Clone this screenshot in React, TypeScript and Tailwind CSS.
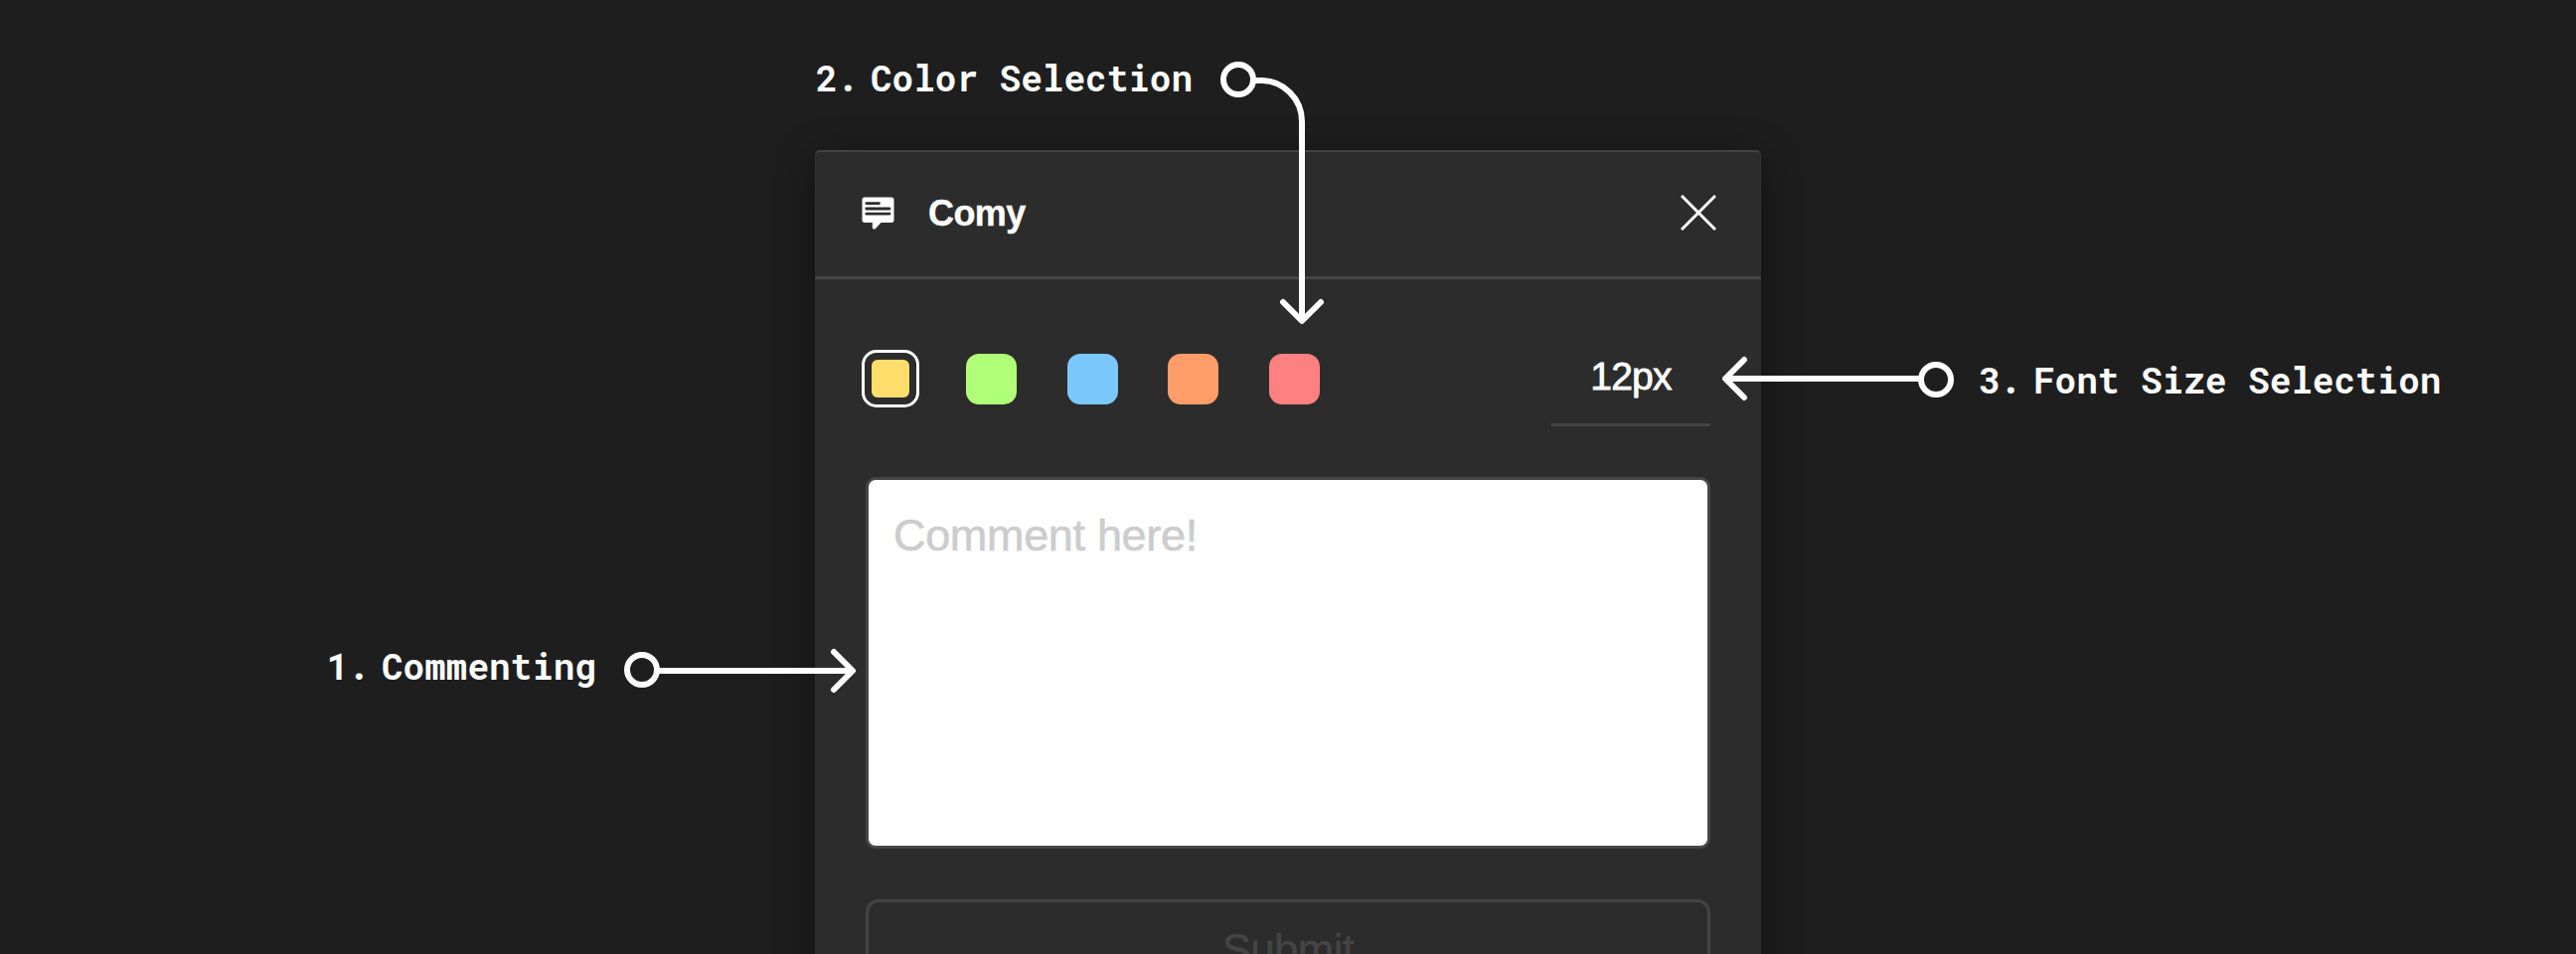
import type { ReactNode } from "react";

const swatches = ["bg-[#afff77]", "bg-[#7bc8ff]", "bg-[#ff9d69]", "bg-[#ff8080]"];

function Label({ n, className, children }: { n: string; className: string; children: ReactNode }) {
  return (
    <div
      className={`absolute flex whitespace-pre font-['Roboto_Mono','Liberation_Mono',monospace] text-[36px] font-bold leading-[48px] text-white ${className}`}
    >
      <span className="w-[55px]">{n}</span>
      <span>{children}</span>
    </div>
  );
}

function CommentIcon() {
  return (
    <svg className="h-[33px] w-[33px]" viewBox="0 0 33 33">
      <path
        fill="#fff"
        d="M3 0.500h27a2.500 2.500 0 0 1 2.500 2.500v20.500a2.500 2.500 0 0 1-2.500 2.500H19.500l-5.500 6c-1 1-3.200 .600-3.200-1V26H3a2.500 2.500 0 0 1-2.500-2.500V3A2.500 2.500 0 0 1 3 .500z"
      />
      <path d="M4.800 6.600H17.500M4.800 12H28M4.800 17.200H28" stroke="#2c2c2c" strokeWidth="2.800" strokeLinecap="round" />
    </svg>
  );
}

export default function App() {
  return (
    <div className="relative h-[960px] w-[2592px] overflow-hidden bg-[#1e1e1e] pt-[151px] font-['Liberation_Sans',Arial,sans-serif]">
      <div className="mx-auto flex h-[1000px] w-[952px] flex-col rounded-[5px] bg-[#2c2c2c] shadow-[0_10px_40px_rgba(0,0,0,0.45)]">
        <header className="flex h-[130px] items-center rounded-t-[5px] border-x border-b-[3px] border-t-2 border-x-[#333] border-b-[#464646] border-t-[#434343] pb-[2px] pl-[46px] pr-[44px]">
          <CommentIcon />
          <h1 className="ml-[34px] text-[36px] font-bold leading-[40px] tracking-[-0.600px] text-white [-webkit-text-stroke:0.400px_#fff]">
            Comy
          </h1>
          <svg className="mb-px ml-auto h-[36px] w-[36px]" viewBox="0 0 36 36">
            <path d="M1 1L35 35M35 1L1 35" stroke="#fff" strokeWidth="3" />
          </svg>
        </header>

        <div className="flex h-[199px] items-start justify-between pl-[47px] pr-[51px] pt-[71px]">
          <div className="flex h-[58px] items-center">
            <div className="mr-[47px] flex size-[58px] items-center justify-center rounded-[15px] border-[3px] border-white">
              <div className="size-[38px] rounded-[6px] bg-[#ffde6c]" />
            </div>
            <div className="flex gap-[50.700px]">
              {swatches.map((c) => (
                <div key={c} className={`size-[51px] rounded-[13px] ${c}`} />
              ))}
            </div>
          </div>
          <div className="h-[77px] w-[160px] border-b-[3px] border-[#444] pt-[4px] text-center text-[39px] leading-[46px] tracking-[-0.800px] text-white [-webkit-text-stroke:0.800px_#fff]">
            12px
          </div>
        </div>

        <div className="mx-[51px] h-[374px] shrink-0 rounded-[10px] border-[3px] border-[#464646] bg-white px-[25px] pt-[31px] text-[45px] leading-[50px] tracking-[-0.330px] text-[#ccc] [-webkit-text-stroke:0.600px_#ccc]">
          Comment here!
        </div>
        <div className="mx-[51px] mt-[51px] h-[120px] shrink-0 rounded-[13px] border-[3px] border-[#434343] pt-[23px] text-center text-[44px] leading-[50px] tracking-[-0.700px] text-[#444] [-webkit-text-stroke:0.500px_#444]">
          Submit
        </div>
      </div>

      <Label n="1." className="left-[329px] top-[646px]">Commenting</Label>
      <Label n="2." className="left-[821px] top-[54px]">Color Selection</Label>
      <Label n="3." className="left-[1991px] top-[358px]">Font Size Selection</Label>

      <svg
        className="absolute inset-0 h-[960px] w-[2592px]"
        viewBox="0 0 2592 960"
        fill="none"
        stroke="#fff"
        strokeWidth="6"
        strokeLinecap="round"
        strokeLinejoin="round"
      >
        <circle cx="646" cy="674" r="15" />
        <path d="M663 675H857M839 656L858 675L839 694" />
        <circle cx="1246" cy="80" r="15" />
        <path d="M1264 81H1269A41 41 0 0 1 1310 122V322M1291 304L1310 323L1329 304" />
        <circle cx="1948" cy="382" r="15" />
        <path d="M1931 381H1737M1755 362L1736 381L1755 400" />
      </svg>
    </div>
  );
}
